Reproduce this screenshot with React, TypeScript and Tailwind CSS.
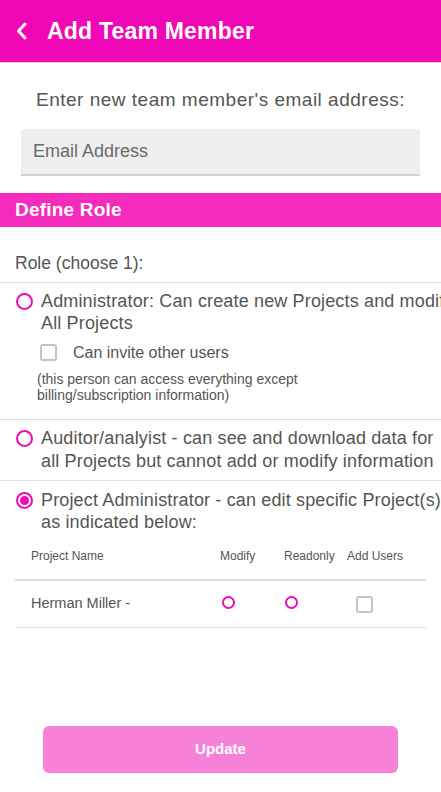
import React, { useState } from 'react';

const Radio: React.FC<{ checked?: boolean; size?: string }> = ({ checked, size = 'w-[17px] h-[17px]' }) => (
  <span className={`${size} rounded-full border-2 border-[#f00ab4] flex items-center justify-center flex-shrink-0 bg-white`}>
    {checked && <span className="w-[9px] h-[9px] rounded-full bg-[#f00ab4]" />}
  </span>
);

const Checkbox: React.FC = () => (
  <span className="w-[17px] h-[17px] rounded-[3px] border-2 border-[#c4c4c4] bg-white flex-shrink-0" />
);

const App: React.FC = () => {
  const [role] = useState('project');

  return (
    <div className="w-[441px] h-[792px] bg-white overflow-hidden relative font-['Liberation_Sans',Arial,sans-serif] text-[#555]">
      {/* Header */}
      <div className="h-[63px] bg-[#f007b5] flex items-center border-b border-[#d9d9d9]">
        <svg className="ml-[15px] w-[14px] h-[18px]" viewBox="0 0 14 18" fill="none">
          <path d="M10 2L3.5 9L10 16" stroke="white" strokeWidth="3" strokeLinecap="round" strokeLinejoin="round" />
        </svg>
        <h1 className="ml-[18px] text-white font-bold text-[23px] tracking-[0.2px]">Add Team Member</h1>
      </div>

      {/* Email */}
      <p className="mt-[26px] text-center text-[19px] leading-[22px] tracking-[0.5px]">Enter new team member's email address:</p>
      <div className="mx-[21px] mt-[18px] h-[47px] bg-[#efefef] rounded-t-[3px] border-b-2 border-[#d2d2d2] flex items-center px-[12px]">
        <span className="text-[18px] text-[#6a6a6a]">Email Address</span>
      </div>

      {/* Define Role */}
      <div className="mt-[17px] h-[34px] bg-[#f52bbd] flex items-center px-[15px]">
        <span className="text-white font-bold text-[19px] tracking-[0.2px]">Define Role</span>
      </div>

      <p className="px-[15px] pt-[25px] pb-[8px] text-[17.5px] leading-[22px]">Role (choose 1):</p>

      <div className="border-t border-[#dedede] pt-[7px] pb-[16px]">
        <div className="flex pl-[16px]">
          <span className="mt-[2.5px]"><Radio checked={role === 'admin'} /></span>
          <p className="ml-[8px] text-[18px] leading-[22px] tracking-[0.15px] whitespace-nowrap">
            <span className="block">Administrator: Can create new Projects and modify</span>
            <span className="block">All Projects</span>
          </p>
        </div>
        <div className="flex items-center pl-[40px] mt-[10px]">
          <Checkbox />
          <span className="ml-[16px] text-[16px] leading-[17px]">Can invite other users</span>
        </div>
        <p className="pl-[37px] mt-[10px] text-[14px] leading-[16px]">
          <span className="block">(this person can access everything except</span>
          <span className="block">billing/subscription information)</span>
        </p>
      </div>

      <div className="border-t border-[#dedede] flex pl-[16px] pt-[7px] pb-[7px]">
        <span className="mt-[3px]"><Radio checked={role === 'auditor'} /></span>
        <p className="ml-[8px] text-[18px] leading-[23px] tracking-[0.15px] whitespace-nowrap">
          <span className="block">Auditor/analyist - can see and download data for</span>
          <span className="block">all Projects but cannot add or modify information</span>
        </p>
      </div>

      <div className="border-t border-[#dedede] flex pl-[16px] pt-[8px]">
        <span className="mt-[2.5px]"><Radio checked={role === 'project'} /></span>
        <p className="ml-[8px] text-[18px] leading-[22px] tracking-[0.15px] whitespace-nowrap">
          <span className="block">Project Administrator - can edit specific Project(s)</span>
          <span className="block">as indicated below:</span>
        </p>
      </div>

      {/* Table */}
      <div className="mx-[15px] mt-[16px]">
        <div className="flex items-center text-[12px] leading-[14px] border-b-2 border-[#e0e0e0] pb-[16px]">
          <span className="pl-[16px] w-[205px]">Project Name</span>
          <span className="w-[64px]">Modify</span>
          <span className="w-[63px]">Readonly</span>
          <span>Add Users</span>
        </div>
        <div className="flex items-center h-[47px] border-b border-[#e0e0e0]">
          <span className="pl-[16px] w-[207px] text-[14.5px]">Herman Miller -</span>
          <span className="w-[63px] -mt-[3px]"><Radio size="w-[13px] h-[13px]" /></span>
          <span className="w-[71px] -mt-[3px]"><Radio size="w-[13px] h-[13px]" /></span>
          <Checkbox />
        </div>
      </div>

      {/* Button */}
      <div className="absolute left-[43px] right-[43px] top-[726px] h-[47px] rounded-[6px] bg-[#f780d9] flex items-center justify-center">
        <span className="text-white font-bold text-[15px]">Update</span>
      </div>
    </div>
  );
};

export default App;
